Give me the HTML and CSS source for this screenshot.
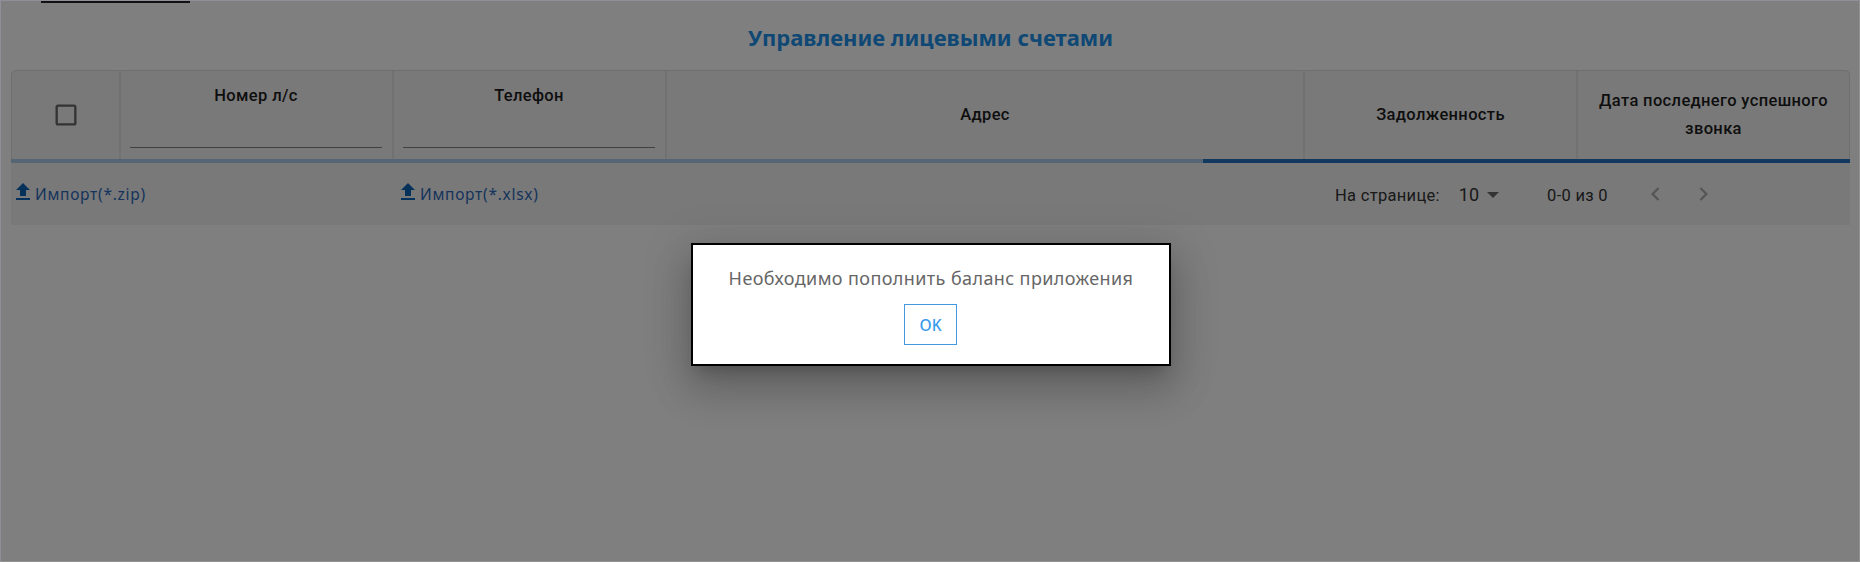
FILE: index.html
```html
<!DOCTYPE html>
<html lang="ru">
<head>
<meta charset="utf-8">
<title>Управление лицевыми счетами</title>
<link rel="stylesheet" href="styles.css">
</head>
<body>
<div class="frame">
  <main class="page">
    <div class="tab-indicator"></div>
    <h1 class="title">Управление лицевыми счетами</h1>
    <section class="table">
      <div class="head">
        <div class="cell">
          <svg class="checkbox" viewBox="0 0 24 24"><path d="M19 5v14H5V5h14m0-2H5c-1.1 0-2 .9-2 2v14c0 1.1.9 2 2 2h14c1.1 0 2-.9 2-2V5c0-1.1-.9-2-2-2z"/></svg>
        </div>
        <div class="cell filter"><span>Номер л/с</span><div class="input"></div></div>
        <div class="cell filter"><span>Телефон</span><div class="input"></div></div>
        <div class="cell"><span>Адрес</span></div>
        <div class="cell"><span>Задолженность</span></div>
        <div class="cell"><span>Дата последнего успешного<br>звонка</span></div>
      </div>
      <div class="progress"><div class="progress-value"></div></div>
      <div class="foot">
        <a class="import"><svg class="upload" viewBox="5 3 14 17"><path d="M5 20h14v-2H5v2zm0-10h4v6h6v-6h4l-7-7-7 7z"/></svg><span>Импорт(*.zip)</span></a>
        <a class="import"><svg class="upload" viewBox="5 3 14 17"><path d="M5 20h14v-2H5v2zm0-10h4v6h6v-6h4l-7-7-7 7z"/></svg><span>Импорт(*.xlsx)</span></a>
        <div class="pager">
          <span class="per-page">На странице:</span>
          <span class="size">10</span>
          <svg class="caret" viewBox="7 10 10 5"><path d="M7 10l5 5 5-5z"/></svg>
          <span class="range">0-0 из 0</span>
          <svg class="chev" viewBox="8 6 8 12"><path d="M15.41 7.41 14 6l-6 6 6 6 1.41-1.41L10.83 12z"/></svg>
          <svg class="chev next" viewBox="8 6 8 12"><path d="M10 6 8.59 7.41 13.17 12l-4.58 4.59L10 18l6-6z"/></svg>
        </div>
      </div>
    </section>
  </main>
  <div class="overlay">
    <div class="dialog">
      <div class="message">Необходимо пополнить баланс приложения</div>
      <button class="ok">OK</button>
    </div>
  </div>
</div>
</body>
</html>
```
FILE: styles.css
```css
* { box-sizing: border-box; }
body { margin: 0; background: #fff; font-family: Roboto, sans-serif; color: #1c1c1c; }
.frame {
  position: relative;
  height: 562px;
  border: 1px solid #929292;
  border-top-color: #8f8f99;
  border-left-color: #8f8f99;
  overflow: hidden;
}
.page { padding: 0 9px 0 10px; }
.tab-indicator { width: 149px; height: 2px; margin-left: 30px; background: #222; }
.title {
  margin: 0;
  height: 67px;
  padding-top: 16px;
  text-align: center;
  color: #2190ea;
  font: 700 22px/36px "Noto Sans", sans-serif;
}
.head {
  display: grid;
  grid-template-columns: 109px 273px 273px 638px 273px 1fr;
  height: 89px;
  background: #f3f3f3;
  border: 1px solid #dcdcdc;
  border-bottom: 0;
  border-radius: 5px 5px 0 0;
  font-weight: 500;
  font-size: 16.5px;
  letter-spacing: .36px;
  line-height: 28px;
  text-align: center;
}
.cell { display: flex; align-items: center; justify-content: center; border-right: 2px solid #e3e3e3; }
.cell:last-child { border-right: 0; }
.filter { flex-direction: column; justify-content: flex-start; align-items: stretch; padding: 11px 10px 0 9px; }
.input { height: 38px; border-bottom: 1px solid #808080; }
.checkbox { width: 28px; height: 28px; fill: #666; }
.progress { height: 4px; display: flex; justify-content: flex-end; background: #adcbe9; }
.progress-value { width: 647px; background: #2470be; }
.foot { display: flex; height: 62px; background: #f3f3f3; color: #333; }
.import {
  display: flex;
  align-items: flex-start;
  width: 385px;
  padding: 20px 0 0 5px;
  gap: 5px;
  color: #2b68b8;
  font: 15.5px/23px "Noto Sans", sans-serif;
  letter-spacing: .72px;
}
.upload { width: 14px; height: 17px; fill: #0d62b6; }
.pager { display: flex; align-items: center; margin-left: 554px; font-size: 16.5px; letter-spacing: .3px; height: 63px; }
.per-page, .range { padding-top: 2px; }
.size { margin-left: 19px; font-size: 18px; letter-spacing: 0; }
.caret { width: 12px; height: 6px; margin-left: 8px; fill: #666; }
.range { margin-left: 48px; }
.chev { width: 9px; height: 14px; margin: 0 0 1px 43px; fill: #aaa; }
.chev.next { margin-left: 39px; }
.overlay {
  position: absolute;
  inset: 0;
  display: flex;
  justify-content: center;
  padding: 242px 0 0 2px;
  background: rgba(0, 0, 0, .5);
}
.dialog {
  width: 480px;
  height: 123px;
  display: flex;
  flex-direction: column;
  align-items: center;
  padding-top: 17px;
  border: 2px solid #000;
  background: #fff;
  box-shadow: 0 11px 15px -7px rgba(0,0,0,.2), 0 24px 38px 3px rgba(0,0,0,.14), 0 9px 46px 8px rgba(0,0,0,.12);
}
.message { height: 42px; font: 18px/32px "Noto Sans", sans-serif; letter-spacing: .4px; color: #666; white-space: nowrap; }
.ok {
  width: 53px;
  height: 41px;
  margin-right: 1px;
  padding: 0;
  border: 1px solid #4398e0;
  background: #fff;
  color: #3a9bec;
  font: 500 15.5px "Noto Sans", sans-serif;
}
```
